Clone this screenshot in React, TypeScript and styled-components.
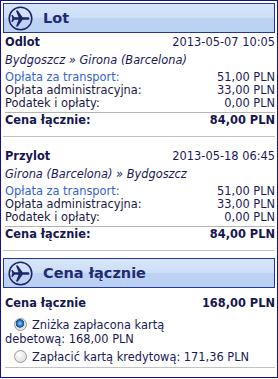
import React from "react";
import styled, { createGlobalStyle } from "styled-components";

const GlobalStyle = createGlobalStyle`
  body {
    margin: 0;
    background: #fff;
    font-family: "DejaVu Sans", Verdana, sans-serif;
    font-size: 11.4px;
    color: #1a1a55;
  }
`;

type Fee = { label: string; value: string; link?: boolean };

const fees: Fee[] = [
  { label: "Opłata za transport:", value: "51,00 PLN", link: true },
  { label: "Opłata administracyjna:", value: "33,00 PLN" },
  { label: "Podatek i opłaty:", value: "0,00 PLN" },
];

const legs = [
  {
    title: "Odlot",
    date: "2013-05-07 10:05",
    route: "Bydgoszcz » Girona (Barcelona)",
    top: 2,
  },
  {
    title: "Przylot",
    date: "2013-05-18 06:45",
    route: "Girona (Barcelona) » Bydgoszcz",
    top: 5,
  },
];

const PlaneIcon = () => (
  <svg width="25" height="25" viewBox="0 0 25 25">
    <circle cx="12.5" cy="12.5" r="11.3" fill="none" stroke="#1d2466" strokeWidth="1.5" />
    <path
      d="M21.5 12.5 C21.5 11.6 20.6 11.3 19.6 11.3 L14.6 11.3 L9.8 4.4 L7.9 4.4 L10.6 11.3 L6.3 11.3 L4.6 8.9 L3.4 8.9 L4.3 12.5 L3.4 16.1 L4.6 16.1 L6.3 13.7 L10.6 13.7 L7.9 20.6 L9.8 20.6 L14.6 13.7 L19.6 13.7 C20.6 13.7 21.5 13.4 21.5 12.5 Z"
      fill="#1d2466"
    />
  </svg>
);

const Panel = ({ title }: { title: string }) => (
  <Header>
    <PlaneIcon />
    <HeaderTitle>{title}</HeaderTitle>
  </Header>
);

const App = () => {
  return (
    <>
      <GlobalStyle />
      <Box>
        <Panel title="Lot" />
        {legs.map((leg) => (
          <Section key={leg.title} $top={leg.top}>
            <Row $lh={14}>
              <Strong>{leg.title}</Strong>
              <span>{leg.date}</span>
            </Row>
            <Route>{leg.route}</Route>
            <Fees>
              {fees.map((f) => (
                <Row key={f.label} $lh={13}>
                  <Label $link={f.link}>{f.label}</Label>
                  <span>{f.value}</span>
                </Row>
              ))}
            </Fees>
            <Total>
              <Strong>Cena łącznie:</Strong>
              <Strong>84,00 PLN</Strong>
            </Total>
          </Section>
        ))}
        <Panel title="Cena łącznie" />
        <Summary>
          <Row $lh={14}>
            <Strong>Cena łącznie</Strong>
            <Strong>168,00 PLN</Strong>
          </Row>
          <Options>
            <Option $gap={8}>
              <Radio $checked />
              Zniżka zapłacona kartą <NoWrap>debetową: 168,00 PLN</NoWrap>
            </Option>
            <Option $gap={4}>
              <Radio />
              Zapłacić kartą kredytową: 171,36 PLN
            </Option>
          </Options>
        </Summary>
      </Box>
    </>
  );
};

export default App;

const Box = styled.div`
  width: 278px;
  box-sizing: border-box;
  border: 1px solid #14147c;
  padding: 2px 2px 9px 2px;
`;

const Header = styled.div`
  height: 30px;
  box-sizing: border-box;
  border: 1px solid #26369c;
  background: linear-gradient(#d6e5f9 0%, #cddef7 48%, #bdd3f3 52%, #bad1f2 100%);
  display: flex;
  align-items: center;
  padding-left: 4px;
  gap: 10px;
`;

const HeaderTitle = styled.span`
  font-size: 14.5px;
  font-weight: bold;
  color: #222b72;
`;

const Section = styled.div<{ $top: number }>`
  padding: ${(p) => p.$top}px 0 9px 2px;
  border-bottom: 1px solid #c2c2c2;
  margin-bottom: 7px;
`;

const Row = styled.div<{ $lh: number }>`
  display: flex;
  justify-content: space-between;
  line-height: ${(p) => p.$lh}px;
  white-space: nowrap;
`;

const Strong = styled.span`
  font-weight: bold;
  color: #161650;
`;

const Route = styled.div`
  font-style: italic;
  line-height: 14px;
  margin-top: 4px;
`;

const Fees = styled.div`
  margin-top: 4px;
`;

const Label = styled.span<{ $link?: boolean }>`
  color: ${(p) => (p.$link ? "#3463d6" : "#1a1a40")};
`;

const Total = styled.div`
  display: flex;
  justify-content: space-between;
  border-top: 1px solid #b4b4b4;
  margin-top: 2px;
  line-height: 14px;
`;

const Summary = styled.div`
  padding: 8px 0 0 2px;
`;

const Options = styled.div`
  border-bottom: 1px solid #c2c2c2;
  padding-bottom: 3px;
`;

const Option = styled.div<{ $gap: number }>`
  margin-top: ${(p) => p.$gap}px;
  line-height: 14px;
`;

const NoWrap = styled.span`
  white-space: nowrap;
`;

const Radio = styled.span<{ $checked?: boolean }>`
  display: inline-block;
  vertical-align: -2px;
  width: 11px;
  height: 11px;
  margin: 0 5px 0 9px;
  border-radius: 50%;
  border: 1px solid #9a9a9a;
  background: ${(p) =>
    p.$checked
      ? "radial-gradient(circle at 45% 40%, #8fd0ff 0%, #2a78c8 30%, #144a90 45%, #dcdcdc 50%, #f4f4f4 100%)"
      : "radial-gradient(circle at 40% 35%, #ffffff 0%, #e6e6e6 60%, #c8c8c8 100%)"};
`;
